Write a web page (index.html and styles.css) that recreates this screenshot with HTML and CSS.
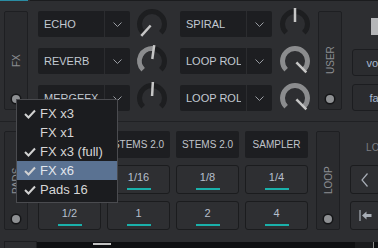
FILE: index.html
```html
<!DOCTYPE html>
<html lang="en">
<head>
  <meta charset="UTF-8">
  <meta name="viewport" content="width=device-width, initial-scale=1.0">
  <title>Deck FX</title>
  <link rel="stylesheet" href="styles.css">
</head>
<body>
  <div id="deck">
    <div class="top-line"><span class="tab-active"></span><span class="tab-rest"></span></div>

    <!-- Effects -->
    <div class="fx-section">
      <div class="side-panel"><span class="side-label">FX</span><span class="side-dot"></span></div>

      <div class="fx-rows">
        <div class="fx-row">
          <div class="fx-select">
            <span class="fx-name">ECHO</span>
            <span class="fx-arrow"><svg width="9" height="5" viewBox="0 0 9 5"><path d="M0.5 0.5 L4.5 4.5 L8.5 0.5"/></svg></span>
          </div>
          <svg class="knob" viewBox="0 0 30 30">
            <path class="knob-track" d="M6.16 23.84 A12.5 12.5 0 1 1 23.84 23.84"/>
            <line class="knob-pointer" x1="13.66" y1="16.49" x2="4.29" y2="26.89"/>
          </svg>
          <div class="fx-select second">
            <span class="fx-name">SPIRAL</span>
            <span class="fx-arrow"><svg width="9" height="5" viewBox="0 0 9 5"><path d="M0.5 0.5 L4.5 4.5 L8.5 0.5"/></svg></span>
          </div>
          <svg class="knob second" viewBox="0 0 30 30">
            <path class="knob-track" d="M6.16 23.84 A12.5 12.5 0 1 1 23.84 23.84"/>
            <line class="knob-pointer" x1="15" y1="13" x2="15" y2="-1"/>
          </svg>
        </div>

        <div class="fx-row">
          <div class="fx-select">
            <span class="fx-name">REVERB</span>
            <span class="fx-arrow"><svg width="9" height="5" viewBox="0 0 9 5"><path d="M0.5 0.5 L4.5 4.5 L8.5 0.5"/></svg></span>
          </div>
          <svg class="knob" viewBox="0 0 30 30">
            <path class="knob-track" d="M6.16 23.84 A12.5 12.5 0 1 1 23.84 23.84"/>
            <path class="knob-value" d="M6.16 23.84 A12.5 12.5 0 0 1 16.74 2.62"/>
            <line class="knob-pointer" x1="15.28" y1="13.02" x2="17.23" y2="-0.84"/>
          </svg>
          <div class="fx-select second">
            <span class="fx-name">LOOP ROL</span>
            <span class="fx-arrow"><svg width="9" height="5" viewBox="0 0 9 5"><path d="M0.5 0.5 L4.5 4.5 L8.5 0.5"/></svg></span>
          </div>
          <svg class="knob second" viewBox="0 0 30 30">
            <path class="knob-track" d="M6.16 23.84 A12.5 12.5 0 1 1 23.84 23.84"/>
            <path class="knob-value" d="M6.16 23.84 A12.5 12.5 0 1 1 23.84 23.84"/>
            <line class="knob-pointer" x1="16.41" y1="16.41" x2="26.31" y2="26.31"/>
          </svg>
        </div>

        <div class="fx-row">
          <div class="fx-select">
            <span class="fx-name">MERGEFX</span>
            <span class="fx-arrow"><svg width="9" height="5" viewBox="0 0 9 5"><path d="M0.5 0.5 L4.5 4.5 L8.5 0.5"/></svg></span>
          </div>
          <svg class="knob" viewBox="0 0 30 30">
            <path class="knob-track" d="M6.16 23.84 A12.5 12.5 0 1 1 23.84 23.84"/>
            <line class="knob-pointer" x1="15.1" y1="13" x2="15.84" y2="-0.98"/>
          </svg>
          <div class="fx-select second">
            <span class="fx-name">LOOP ROL</span>
            <span class="fx-arrow"><svg width="9" height="5" viewBox="0 0 9 5"><path d="M0.5 0.5 L4.5 4.5 L8.5 0.5"/></svg></span>
          </div>
          <svg class="knob second" viewBox="0 0 30 30">
            <path class="knob-track" d="M6.16 23.84 A12.5 12.5 0 1 1 23.84 23.84"/>
            <path class="knob-value" d="M6.16 23.84 A12.5 12.5 0 1 1 23.84 23.84"/>
            <line class="knob-pointer" x1="16.41" y1="16.41" x2="26.31" y2="26.31"/>
          </svg>
        </div>
      </div>

      <div class="side-panel gap-left"><span class="side-label">USER</span><span class="side-dot"></span></div>

      <div class="user-col">
        <span class="user-handle"></span>
        <div class="user-btn">vocals</div>
        <div class="user-btn second">fader</div>
      </div>
    </div>

    <div class="divider"></div>

    <!-- Pads -->
    <div class="pads-section">
      <div class="side-panel"><span class="side-label">PADS</span><span class="side-dot"></span></div>

      <div class="pad-grid">
        <div class="page-btn">HOTCUES</div>
        <div class="page-btn">STEMS 2.0</div>
        <div class="page-btn">STEMS 2.0</div>
        <div class="page-btn">SAMPLER</div>

        <div class="pad"><span>1/32</span><i class="pad-bar"></i></div>
        <div class="pad"><span>1/16</span><i class="pad-bar"></i></div>
        <div class="pad"><span>1/8</span><i class="pad-bar"></i></div>
        <div class="pad"><span>1/4</span><i class="pad-bar"></i></div>

        <div class="pad"><span>1/2</span><i class="pad-bar"></i></div>
        <div class="pad"><span>1</span><i class="pad-bar"></i></div>
        <div class="pad"><span>2</span><i class="pad-bar"></i></div>
        <div class="pad"><span>4</span><i class="pad-bar"></i></div>
      </div>

      <div class="side-panel gap-left"><span class="side-label">LOOP</span><span class="side-dot"></span></div>

      <div class="loop-col">
        <div class="loop-label">LOOP</div>
        <div class="loop-row">
          <div class="loop-btn"><svg width="8" height="14" viewBox="0 0 8 14"><path d="M6.5 0.5 L1 7 L6.5 13.5"/></svg></div>
          <div class="loop-btn"><svg width="8" height="14" viewBox="0 0 8 14"><path d="M1.5 0.5 L7 7 L1.5 13.5"/></svg></div>
        </div>
        <div class="loop-row second">
          <div class="loop-btn"><svg width="13" height="11" viewBox="0 0 13 11"><path d="M1 0 L1 11"/><path class="fill" d="M3 5.5 L7.5 1.5 L7.5 4 L12.5 4 L12.5 7 L7.5 7 L7.5 9.5 Z"/></svg></div>
          <div class="loop-btn"><svg width="13" height="11" viewBox="0 0 13 11"><path d="M12 0 L12 11"/><path class="fill" d="M10 5.5 L5.5 1.5 L5.5 4 L0.5 4 L0.5 7 L5.5 7 L5.5 9.5 Z"/></svg></div>
        </div>
      </div>
    </div>

    <div class="footer">
      <span class="footer-box"></span>
      <div class="footer-strip">
        <span class="scroll-handle"></span>
        <span class="strip-fill"></span>
        <span class="strip-seg"></span>
        <span class="strip-mark"></span>
      </div>
    </div>

    <!-- Pads layout menu, open over the pad panel -->
    <div class="pad-menu">
      <div class="menu-item"><svg class="check" width="12" height="10" viewBox="0 0 12 10"><path d="M1 5 L4.5 8.5 L11 1.5"/></svg>FX x3</div>
      <div class="menu-item"><span class="check"></span>FX x1</div>
      <div class="menu-item"><svg class="check" width="12" height="10" viewBox="0 0 12 10"><path d="M1 5 L4.5 8.5 L11 1.5"/></svg>FX x3 (full)</div>
      <div class="menu-item selected"><svg class="check" width="12" height="10" viewBox="0 0 12 10"><path d="M1 5 L4.5 8.5 L11 1.5"/></svg>FX x6</div>
      <div class="menu-item"><svg class="check" width="12" height="10" viewBox="0 0 12 10"><path d="M1 5 L4.5 8.5 L11 1.5"/></svg>Pads 16</div>
    </div>
  </div>
</body>
</html>
```

FILE: styles.css
```css
html, body {
  margin: 0;
  overflow: hidden;
}
body {
  background: #2d2e31;
  font-family: "Liberation Sans", Arial, sans-serif;
}
#deck {
  position: relative;
  width: 378px;
  height: 248px;
  overflow: hidden;
}
.top-line {
  display: flex;
  gap: 2px;
  height: 1px;
}
.tab-active {
  width: 28px;
  background: #2a8ca3;
}
.tab-rest {
  flex: 1;
  background: #1b1c1e;
}

/* side panels (FX / USER / PADS / LOOP) */
.side-panel {
  width: 24px;
  height: 99px;
  box-sizing: border-box;
  flex-shrink: 0;
  display: flex;
  flex-direction: column;
  align-items: center;
  padding: 18px 0 6px;
  background: #2a2b2e;
  border: 1px solid #1e1f22;
  border-radius: 2px;
}
.side-panel.gap-left {
  margin-left: 8px;
}
.side-label {
  flex: 1;
  display: flex;
  align-items: center;
  justify-content: center;
  writing-mode: vertical-rl;
  transform: rotate(180deg);
  font-size: 10px;
  color: #8b8d91;
}
.side-dot {
  width: 8px;
  height: 8px;
  margin-top: 4px;
  border-radius: 50%;
  background: #8e9093;
  box-shadow: 0 0 0 1.5px #141517;
}

/* effects */
.fx-section {
  display: flex;
  margin-top: 10px;
  padding-left: 4px;
  height: 100px;
}
.fx-rows {
  display: flex;
  flex-direction: column;
  gap: 11px;
  margin-left: 10px;
}
.fx-row {
  display: flex;
  align-items: center;
  height: 26px;
}
.fx-select {
  display: flex;
  width: 92px;
  height: 26px;
  background: #1d1e21;
  border-radius: 2px;
}
.fx-select.second {
  margin-left: 13px;
}
.fx-name {
  flex: 1;
  margin: 0 5px 0 6px;
  overflow: hidden;
  white-space: nowrap;
  line-height: 26px;
  font-size: 11px;
  color: #c2c9d2;
}
.fx-arrow {
  width: 25px;
  display: flex;
  align-items: center;
  justify-content: center;
  border-left: 1px solid #2b2c2f;
}
.fx-arrow path {
  fill: none;
  stroke: #999ca2;
  stroke-width: 1;
}
.knob {
  width: 30px;
  height: 30px;
  margin: -2px 0 -2px 7px;
  overflow: visible;
}
.knob.second {
  margin-left: 8px;
}
.knob-track,
.knob-value {
  fill: none;
  stroke-width: 5;
}
.knob-track {
  stroke: #1d1e20;
}
.knob-value {
  stroke: #8b8c8e;
}
.knob-pointer {
  stroke: #c6c6c6;
  stroke-width: 2.5;
}
.user-col {
  display: flex;
  flex-direction: column;
  margin-left: 10px;
  padding-top: 7px;
}
.user-handle {
  width: 10px;
  height: 17px;
  margin-left: 19px;
  background: #b5b6b8;
}
.user-btn {
  width: 60px;
  height: 27px;
  box-sizing: border-box;
  margin-top: 14px;
  display: flex;
  align-items: center;
  justify-content: center;
  background: #2b2c2f;
  border: 1px solid #1c1d20;
  border-radius: 3px;
  font-size: 11px;
  color: #a9b9cf;
}
.user-btn.second {
  margin-top: 8px;
}

.divider {
  height: 1px;
  margin-top: 10px;
  background: #202124;
}

/* pads */
.pads-section {
  display: flex;
  margin-top: 9px;
  padding-left: 4px;
  height: 99px;
}
.pad-grid {
  display: grid;
  grid-template-columns: repeat(4, 63px);
  grid-template-rows: 27px 29px 29px;
  column-gap: 6px;
  row-gap: 7px;
  margin-left: 10px;
}
.page-btn {
  display: flex;
  align-items: center;
  justify-content: center;
  background: #1d1e21;
  border-radius: 2px;
  font-size: 10px;
  color: #c0c4ca;
}
.pad {
  display: flex;
  flex-direction: column;
  align-items: center;
  box-sizing: border-box;
  padding-top: 5px;
  background: #2e2f32;
  border: 1px solid #1b1c1e;
  border-radius: 3px;
}
.pad span {
  line-height: 12px;
  font-size: 11px;
  color: #b6bfcc;
}
.pad-bar {
  width: 24px;
  height: 2px;
  margin-top: 5px;
  background: #1ab0aa;
}
.loop-col {
  display: flex;
  flex-direction: column;
  margin-left: 10px;
}
.loop-label {
  width: 60px;
  margin-top: 11px;
  line-height: 12px;
  text-align: center;
  font-size: 10px;
  color: #7b7d81;
}
.loop-row {
  display: flex;
  gap: 4px;
  margin-top: 11px;
}
.loop-row.second {
  margin-top: 7px;
}
.loop-btn {
  width: 30px;
  height: 29px;
  box-sizing: border-box;
  display: flex;
  align-items: center;
  justify-content: center;
  background: #2e2f32;
  border: 1px solid #1b1c1e;
  border-radius: 3px;
}
.loop-btn path {
  fill: none;
  stroke: #a7adb5;
  stroke-width: 1.2;
}
.loop-btn path.fill {
  fill: #a7adb5;
  stroke: none;
}

/* footer strip */
.footer {
  display: flex;
  margin-top: 11px;
  padding-left: 4px;
  height: 7px;
}
.footer-box {
  width: 33px;
  box-sizing: border-box;
  border: 1px solid #1e1f22;
  border-bottom: none;
}
.footer-strip {
  flex: 1;
  display: flex;
  margin-top: 1px;
  background: #0f1012;
}
.scroll-handle {
  width: 18px;
  height: 2px;
  margin: 1px 0 0 56px;
  background: #c2c2c2;
}
.strip-fill {
  flex: 1;
}
.strip-seg {
  width: 18px;
  background: #1b1c1e;
}
.strip-mark {
  width: 1px;
  margin-right: 4px;
  background: #8a8a8a;
}

/* dropdown menu */
.pad-menu {
  position: absolute;
  left: 16px;
  top: 99px;
  width: 102px;
  box-sizing: border-box;
  padding: 4px 0 3px;
  background: #1b1c1f;
  border: 1px solid #4a4b4f;
}
.menu-item {
  display: flex;
  align-items: center;
  height: 19px;
  padding-left: 7px;
  font-size: 13px;
  color: #d6d6d6;
  white-space: nowrap;
}
.menu-item.selected {
  background: #5a7292;
  color: #e2e7ee;
}
.check {
  width: 12px;
  height: 10px;
  margin-right: 4px;
}
.check path {
  fill: none;
  stroke: #d2d2d2;
  stroke-width: 2;
}
```
